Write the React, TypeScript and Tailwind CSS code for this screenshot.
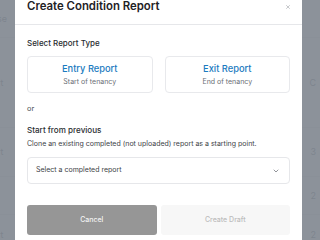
import { ChevronDown, X } from "lucide-react";

const bgRows = [
  { h: "h-[38px]", left: "se", right: "" },
  { h: "h-[90px]", left: "rt", right: "C" },
  { h: "h-[49px]", left: "rt", right: "3" },
  { h: "h-[38px]", left: "", right: "2" },
  { h: "h-[40px]", left: "rt", right: "2" }
];

const ReportTypeCard = ({ title, subtitle }: { title: string; subtitle: string }) => (
  <button
    type="button"
    className="flex h-[37px] flex-1 flex-col items-center justify-center rounded-[4px] border border-[#e8e9ec] bg-white"
  >
    <span className="text-[9.3px] leading-[12px] font-medium text-[#1b7bc0]">{title}</span>
    <span className="mt-[2px] text-[7px] leading-[10px] text-[#6b6f76]">{subtitle}</span>
  </button>
);

const App = () => {
  return (
    <div className="relative h-[240px] w-[320px] overflow-hidden bg-[#f3f4f6] font-['Inter','Noto_Sans',sans-serif]">
      {/* page behind the dialog */}
      <div className="flex flex-col bg-white">
        {bgRows.map((row, i) => (
          <div key={i} className={`flex ${row.h} items-center justify-between border-b border-[#e5e7eb] px-[1px] text-[9px] text-[#6b7280]`}>
            <span className="-ml-[4px]">{row.left}</span>
            <span className="mr-[3px]">{row.right}</span>
          </div>
        ))}
      </div>

      {/* overlay */}
      <div className="absolute inset-0 bg-[#80868f]/90" />

      {/* dialog */}
      <div className="absolute left-[15px] top-[-14px] w-[287px] rounded-[6px] bg-white">
        <div className="flex h-[39px] items-end justify-between border-b border-[#e6e7ea] px-3 pb-[10px]">
          <h2 className="text-[11.4px] leading-[15px] font-semibold text-[#1f2226]">Create Condition Report</h2>
          <X className="mb-[4px] mr-[-1px] h-[6px] w-[6px] text-[#a3a6ab]" strokeWidth={2.5} />
        </div>

        <div className="px-3 pt-[13px]">
          <h3 className="text-[8px] leading-[11px] font-medium text-[#2a2d31]">Select Report Type</h3>
          <div className="mt-[7px] flex gap-3">
            <ReportTypeCard title="Entry Report" subtitle="Start of tenancy" />
            <ReportTypeCard title="Exit Report" subtitle="End of tenancy" />
          </div>

          <p className="mt-[11px] text-[7.3px] leading-[10px] text-[#4b4f55]">or</p>

          <h3 className="mt-[11px] text-[8.1px] leading-[11px] font-medium text-[#2a2d31]">Start from previous</h3>
          <p className="mt-[3px] text-[7px] leading-[10px] text-[#3d4146]">
            Clone an existing completed (not uploaded) report as a starting point.
          </p>

          <button
            type="button"
            className="mt-[8px] flex h-[27px] w-full items-center justify-between rounded-[4px] border border-[#e6e7ea] bg-white pl-[8px] pr-[9px] text-left"
          >
            <span className="text-[7px] text-[#3d4146]">Select a completed report</span>
            <ChevronDown className="h-[8px] w-[8px] text-[#5b5f66]" strokeWidth={2} />
          </button>

          <div className="mt-[21px] flex gap-[4px] pb-4">
            <button
              type="button"
              className="flex h-[30px] flex-1 items-center justify-center rounded-[3px] bg-[#969696] text-[7px] font-medium text-[#f2f2f2]"
            >
              Cancel
            </button>
            <button
              type="button"
              className="flex h-[30px] flex-1 items-center justify-center rounded-[3px] bg-[#f7f7f7] text-[7px] font-medium text-[#bdbdbd]"
            >
              Create Draft
            </button>
          </div>
        </div>
      </div>
    </div>
  );
};

export default App;
